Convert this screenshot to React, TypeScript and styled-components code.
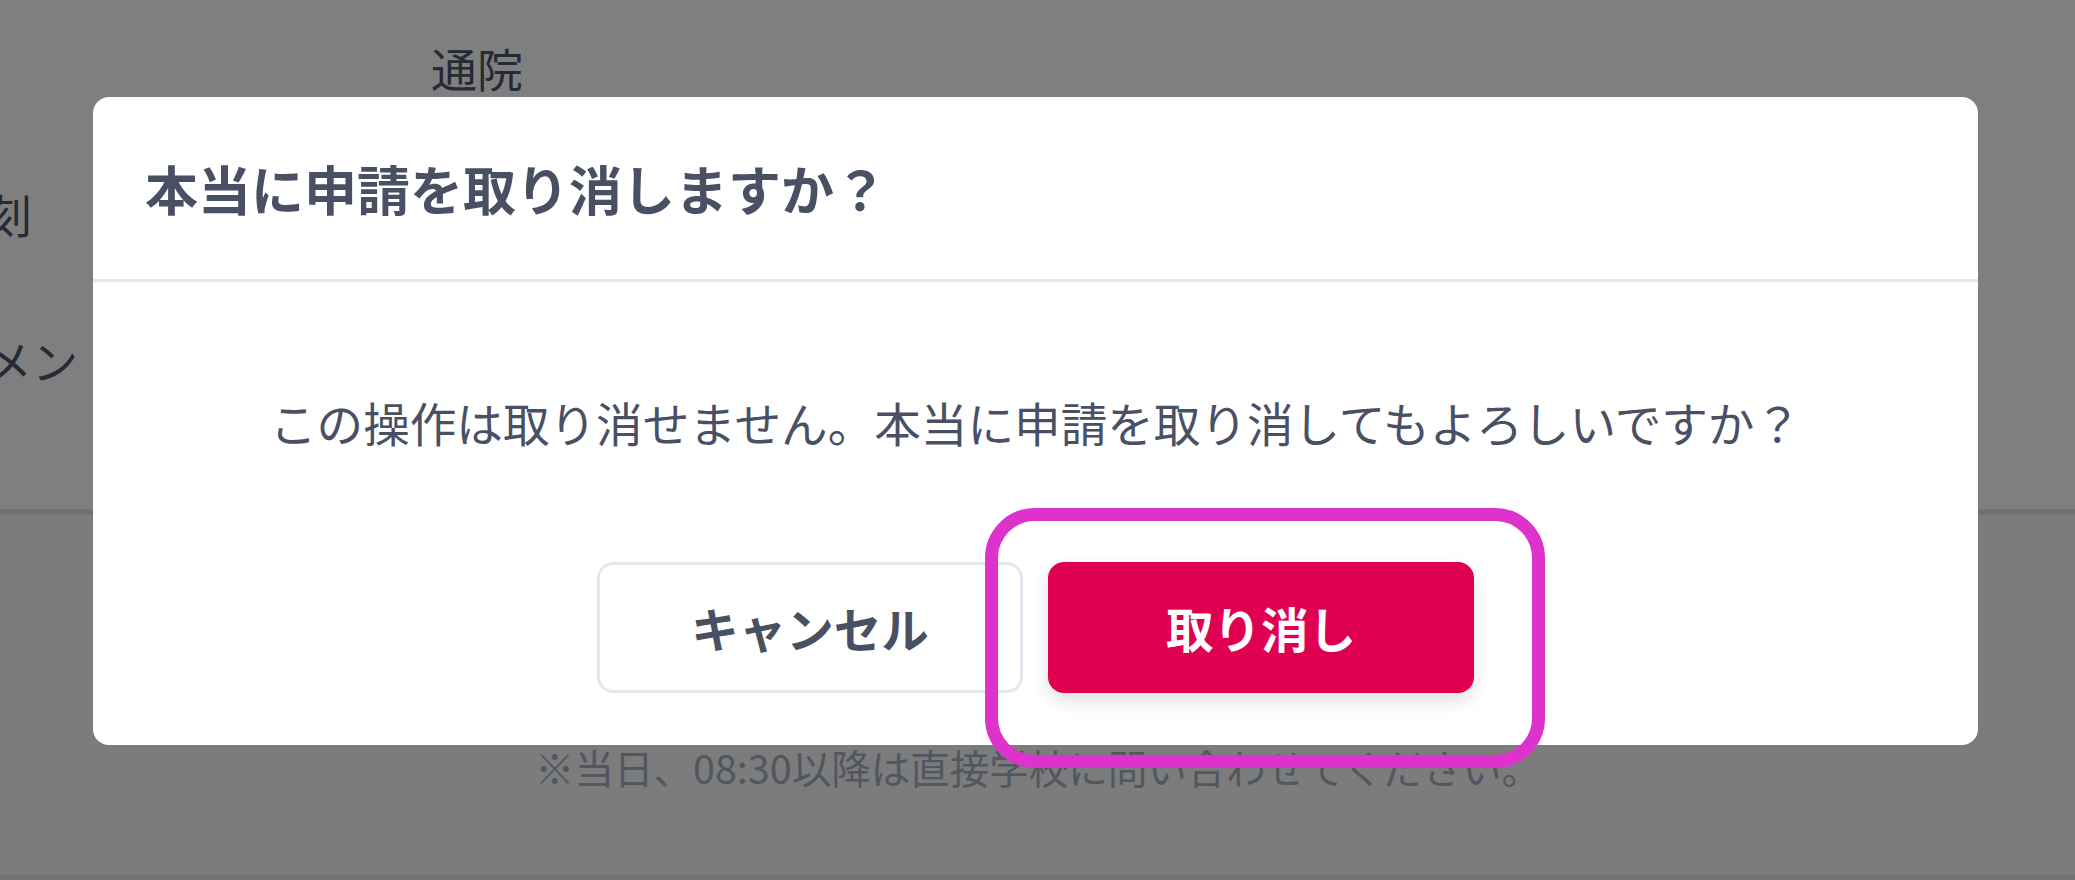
import React from "react";
import styled, { createGlobalStyle } from "styled-components";

const GlobalStyle = createGlobalStyle`
  html, body {
    margin: 0;
    padding: 0;
    width: 2075px;
    height: 880px;
    overflow: hidden;
    background: #ffffff;
  }
  body {
    font-family: "Noto Sans CJK JP", "Noto Sans", sans-serif;
    color: #4a5568;
  }
  * {
    box-sizing: border-box;
  }
`;

const rows = [
  { label: "", value: "通院" },
  { label: "時刻", value: "" },
  { label: "コメント", value: "" },
];

export default function App() {
  return (
    <>
      <GlobalStyle />
      <Page>
        <FormSection>
          {rows.map((row, i) => (
            <FormRow key={i}>
              <Label>{row.label}</Label>
              <Value>{row.value}</Value>
            </FormRow>
          ))}
        </FormSection>
        <NoteSection>
          <Note>※当日、08:30以降は直接学校に問い合わせてください。</Note>
        </NoteSection>
        <FooterBar />
      </Page>

      <Overlay>
        <Modal role="dialog" aria-modal="true">
          <ModalHeader>
            <Title>本当に申請を取り消しますか？</Title>
          </ModalHeader>
          <ModalBody>
            <Message>
              この操作は取り消せません。本当に申請を取り消してもよろしいですか？
            </Message>
            <Actions>
              <Button $variant="secondary">キャンセル</Button>
              <Highlighted>
                <Button $variant="danger">取り消し</Button>
                <HighlightRing />
              </Highlighted>
            </Actions>
          </ModalBody>
        </Modal>
      </Overlay>
    </>
  );
}

const Page = styled.div`
  width: 2075px;
  height: 880px;
  display: flex;
  flex-direction: column;
`;

const FormSection = styled.div`
  height: 515px;
  flex-shrink: 0;
  padding-top: 40px;
  margin-left: -60px;
  display: flex;
  flex-direction: column;
  gap: 92px;
  border-bottom: 6px solid #dde4e3;
`;

const FormRow = styled.div`
  display: grid;
  grid-template-columns: 491px 1fr;
  height: 54px;
  align-items: center;
  font-size: 46px;
  line-height: 54px;
  color: #4a5568;
  white-space: nowrap;
`;

const Label = styled.div`
  font-weight: 400;
`;

const Value = styled.div``;

const NoteSection = styled.div`
  flex: 1;
  background: #f8f8f8;
  padding: 230px 0 0 535px;
`;

const Note = styled.p`
  margin: 0;
  font-size: 39.5px;
  line-height: 44px;
  color: #a0aec0;
  white-space: nowrap;
`;

const FooterBar = styled.div`
  height: 5px;
  flex-shrink: 0;
  background: #e2e6ea;
`;

const Overlay = styled.div`
  position: fixed;
  inset: 0;
  background: rgba(0, 0, 0, 0.5);
  display: flex;
  align-items: flex-start;
  padding: 97px 97px 0 93px;
`;

const Modal = styled.div`
  flex: 1;
  background: #ffffff;
  border-radius: 16px;
  display: flex;
  flex-direction: column;
`;

const ModalHeader = styled.div`
  height: 185px;
  padding: 0 52px;
  display: flex;
  align-items: center;
  border-bottom: 3px solid #e2e8f0;
`;

const Title = styled.h2`
  margin: 0;
  font-size: 53px;
  font-weight: 700;
  line-height: 1.3;
  color: #4a5064;
`;

const ModalBody = styled.div`
  padding: 105px 52px 52px;
  display: flex;
  flex-direction: column;
  align-items: center;
  gap: 106px;
`;

const Message = styled.p`
  margin: 0;
  font-size: 46.6px;
  line-height: 69px;
  color: #4a5064;
  text-align: center;
  white-space: nowrap;
`;

const Actions = styled.div`
  display: flex;
  justify-content: center;
  gap: 25px;
`;

const Highlighted = styled.div`
  position: relative;
  display: flex;
`;

const HighlightRing = styled.div`
  position: absolute;
  left: -63px;
  right: -71px;
  top: -54px;
  bottom: -75px;
  border: 13px solid #dd33cc;
  border-radius: 50px;
  pointer-events: none;
`;

const Button = styled.button<{ $variant: "secondary" | "danger" }>`
  width: 426px;
  height: 131px;
  border-radius: 16px;
  font-family: inherit;
  font-size: 47.5px;
  font-weight: 700;
  cursor: pointer;
  border: ${({ $variant }) =>
    $variant === "secondary" ? "3px solid #e2e8f0" : "none"};
  background: ${({ $variant }) =>
    $variant === "secondary" ? "#ffffff" : "#e00052"};
  color: ${({ $variant }) => ($variant === "secondary" ? "#4a5064" : "#ffffff")};
  box-shadow: ${({ $variant }) =>
    $variant === "danger" ? "0 8px 18px rgba(0, 0, 0, 0.12)" : "none"};
`;
